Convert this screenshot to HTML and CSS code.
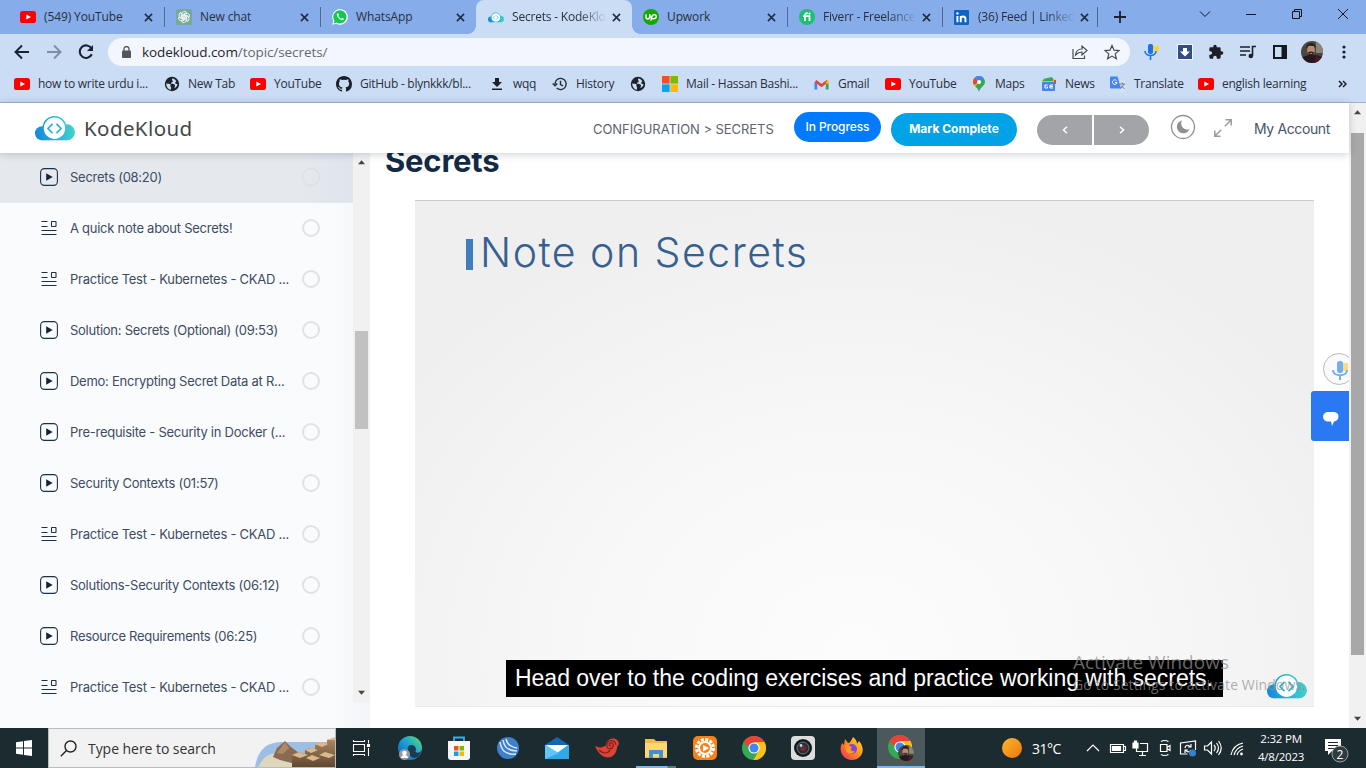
FILE: index.html
```
<!DOCTYPE html>
<html lang="en">
<head>
<meta charset="utf-8">
<title>Secrets - KodeKloud</title>
<link rel="stylesheet" href="styles.css">
</head>
<body>
<svg class="defs" aria-hidden="true">
  <defs>
    <linearGradient id="cloud" gradientUnits="userSpaceOnUse" x1="0" y1="18" x2="40" y2="12"><stop offset="0" stop-color="#1687d9"/><stop offset=".55" stop-color="#25b9dc"/><stop offset="1" stop-color="#4bd0c5"/></linearGradient>
    <linearGradient id="edge" x1="0" y1="1" x2="1" y2="0"><stop offset="0" stop-color="#0b58b0"/><stop offset=".5" stop-color="#169ed8"/><stop offset="1" stop-color="#65df68"/></linearGradient>
    <linearGradient id="sun" x1="0" y1="0" x2="1" y2="1"><stop offset="0" stop-color="#fbb829"/><stop offset="1" stop-color="#ee7511"/></linearGradient>
    <linearGradient id="fox" x1="1" y1="0" x2="0" y2="1"><stop offset="0" stop-color="#ffe32f"/><stop offset=".5" stop-color="#ff8a1c"/><stop offset="1" stop-color="#ef2666"/></linearGradient>
    <linearGradient id="rock" x1="0" y1="0" x2="0" y2="1"><stop offset="0" stop-color="#b08b60"/><stop offset="1" stop-color="#5e4832"/></linearGradient>
  </defs>
  <symbol id="yt" viewBox="0 0 16 12"><rect width="16" height="12" rx="2.6" fill="#f00"/><path d="M6.3 3.4 11 6 6.3 8.6z" fill="#fff"/></symbol>
  <symbol id="x" viewBox="0 0 10 10"><path d="M1 1l8 8M9 1 1 9" stroke="#1f2b40" stroke-width="1.7"/></symbol>
  <symbol id="gpt" viewBox="0 0 16 16"><rect width="16" height="16" rx="2" fill="#75a99c"/><g fill="none" stroke="#fff" stroke-width=".8"><path id="petal" d="M6 8.800V4.800a2.500 2.500 0 0 1 4.500-1.500L7 5.400v3.200"/><use href="#petal" transform="rotate(60 8 8)"/><use href="#petal" transform="rotate(120 8 8)"/><use href="#petal" transform="rotate(180 8 8)"/><use href="#petal" transform="rotate(240 8 8)"/><use href="#petal" transform="rotate(300 8 8)"/></g></symbol>
  <symbol id="wa" viewBox="0 0 16 16"><path d="M.2 15.8 1.4 12A7.8 7.8 0 1 1 4.3 14.8z" fill="#fff"/><path d="M1.700 14.400 2.500 11.700A6.600 6.600 0 1 1 4.600 13.600z" fill="#13c850"/><path d="M5.500 4.300c-1 .7-1 2 .2 3.800s3.200 3.300 4.600 3.200 1.800-1.300 1.500-1.700L10 8.700l-.9 1C7.800 9.200 6.900 8.200 6.400 7l.7-.9-.7-1.700z" fill="#fff"/></symbol>
  <symbol id="kk" viewBox="0 0 40 25"><g fill="url(#cloud)"><circle cx="19.500" cy="12" r="12"/><circle cx="7" cy="17.300" r="7"/><circle cx="32" cy="16.300" r="8"/><path d="M7 14h25v10.300H7z"/></g><circle cx="19.500" cy="12.300" r="10.700" fill="#fff"/><path d="m17.500 7.800-4.500 4.700 4.500 4.700m4-9.400 4.500 4.700-4.500 4.700" fill="none" stroke="#29b3d6" stroke-width="1.700"/></symbol>
  <symbol id="up" viewBox="0 0 16 16"><circle cx="8" cy="8" r="8" fill="#14a800"/><path d="M3 5.300v2.800c0 2.600 3.600 2.600 3.600 0V5.300c1 3.400 2 4.500 3.800 4.500 3.800 0 3.600-4.200.8-4.200-2.400 0-2.600 2.300-3.300 6.100" fill="none" stroke="#fff" stroke-width="1.400"/></symbol>
  <symbol id="fi" viewBox="0 0 16 16"><circle cx="8" cy="8" r="8" fill="#1dbf73"/><path d="M6 12V6q0-2 2.800-1.700M4 7.200h6.500V12" fill="none" stroke="#fff" stroke-width="1.800"/><circle cx="10.500" cy="4.600" r="1.100" fill="#fff"/></symbol>
  <symbol id="li" viewBox="0 0 14 14"><rect width="14" height="14" rx="1" fill="#0a66c2"/><path d="M3.200 5.500v6M6.300 5.500v6M6.300 8.500c0-3.200 4.400-3.200 4.400 0v3" fill="none" stroke="#fff" stroke-width="1.800"/><circle cx="3.200" cy="3.200" r="1.100" fill="#fff"/></symbol>
  <symbol id="globe" viewBox="0 0 16 16"><circle cx="8" cy="8" r="7.200" fill="#1d222b"/><path d="M2.300 7.200c1.500.8 2 .3 3.500.8 2 1-.5 1.800 1.200 3v2.800C4 13.300 2 10.500 2.300 7.200zM8.500 2.600c-1.500 1.700.8 2 .2 3.200-.5 1-2 .4-1.700 1.600 1.500.8 3 .2 3.800 1.300s-.4 2.200-.4 3.400c1.700-.8 3-2.400 3.100-4.200-1.300.2-2-.2-2.500-1.200l1.300-1.200C11.500 3.800 10.300 2.800 8.500 2.600z" fill="#cbdcf5"/></symbol>
  <symbol id="gh" viewBox="0 0 16 16"><path fill="#1b2028" d="M8 0C3.580 0 0 3.580 0 8c0 3.540 2.290 6.530 5.470 7.590.400.070.550-.170.550-.380v-1.500c-2.010.370-2.530-.490-2.690-.940-.090-.230-.480-.940-.820-1.130-.280-.150-.680-.520-.010-.530.630-.010 1.080.580 1.230.820.720 1.210 1.870.870 2.330.660.070-.520.280-.870.510-1.070-1.780-.200-3.640-.890-3.640-3.950 0-.870.310-1.590.820-2.150-.080-.200-.360-1.020.080-2.120 0 0 .670-.210 2.200.820a7.600 7.600 0 0 1 4 0c1.530-1.040 2.200-.820 2.200-.820.440 1.100.160 1.920.080 2.120.510.560.820 1.270.820 2.150 0 3.070-1.870 3.750-3.650 3.950.290.250.540.730.540 1.480v2.200c0 .210.150.460.550.380A8 8 0 0 0 16 8c0-4.420-3.580-8-8-8z"/></symbol>
  <symbol id="dl" viewBox="0 0 16 16"><path d="M6 2h4v4h3l-5 5-5-5h3zM3 12.500h10V14H3z" fill="#1b2028"/></symbol>
  <symbol id="hist" viewBox="0 0 16 16"><path d="M3 8a5.600 5.600 0 1 1 1.700 4M.7 7.500 3 9.800l2.300-2.300M8.500 4.800v3.700l2.600 1.500" fill="none" stroke="#252b35" stroke-width="1.400"/></symbol>
  <symbol id="ms" viewBox="0 0 16 16"><path fill="#f25022" d="M0 0h7.600v7.600H0z"/><path fill="#7fba00" d="M8.400 0H16v7.600H8.400z"/><path fill="#00a4ef" d="M0 8.400h7.600V16H0z"/><path fill="#ffb900" d="M8.400 8.400H16V16H8.400z"/></symbol>
  <symbol id="gm" viewBox="0 0 16 12"><path d="M1.800 11.500V3.500" stroke="#4285f4" stroke-width="3"/><path d="M14.200 11.500V3.500" stroke="#34a853" stroke-width="3"/><path d="m1.500 2.200 6.500 5 6.500-5" fill="none" stroke="#ea4335" stroke-width="3"/><path d="m12.700 3.500 3-2.700v4.400h-3z" fill="#fbbc04"/></symbol>
  <symbol id="map" viewBox="0 0 12 16"><clipPath id="pin"><path d="M6 0a6 6 0 0 0-6 6c0 4 5 5 6 10 1-5 6-6 6-10a6 6 0 0 0-6-6z"/></clipPath><g clip-path="url(#pin)"><path d="M0 0h12v16H0z" fill="#34a853"/><path d="M2 2 6 6l6-6H0z" fill="#4285f4"/><path d="M0 0 6 6 0 13z" fill="#fbbc04"/><path d="M0 0 6 6 1 9H0z" fill="#ea4335"/><path d="M1.500 1.500 6 6l5-6H2z" fill="#4285f4"/></g><circle cx="6" cy="6" r="2.100" fill="#fff"/></symbol>
  <symbol id="news" viewBox="0 0 16 14"><path d="M2 2 11 0l1 4z" fill="#34a853"/><path d="m8 2 7 1v4H8z" fill="#ea4335"/><path d="M1 3h12v4H1z" fill="#fbbc04"/><path d="M2 2.500 12 1v3H2z" fill="#34a853"/><rect x="1" y="5" width="13" height="9" rx="1" fill="#4285f4"/><path d="M6.500 8H4v3h2.500V9.500M12 8H9v3h3M9 9.500h3" fill="none" stroke="#fff"/></symbol>
  <symbol id="tr" viewBox="0 0 16 16"><path d="M7 4h7.500q1 0 1 1v11H10z" fill="#dce1e8"/><path d="M9.500 8H15M12.300 6.500V8M14 8q-1 3-4 4.500M11 9.500l3.500 3.500" stroke="#66809f" fill="none"/><path d="M1 .5h6.500L11 12.500H1q-1 0-1-1v-10q0-1 1-1z" fill="#4285f4"/><path d="M6.500 4.500a2.300 2.300 0 1 0 .6 2H5" fill="none" stroke="#fff"/></symbol>
  <symbol id="mic" viewBox="0 0 16 16"><path d="M8 2h7v5h-5z" fill="#fbd33c"/><rect x="4" y="0" width="5" height="10" rx="2" fill="#1a73e8"/><path d="M1 7c0 6 11 6 11 0M6.500 12v4" fill="none" stroke="#1a73e8" stroke-width="1.600"/></symbol>
  <symbol id="face" viewBox="0 0 22 22"><clipPath id="fc"><circle cx="11" cy="11" r="11"/></clipPath><g clip-path="url(#fc)"><path fill="#4b4740" d="M0 0h22v22H0z"/><path fill="#8b8577" d="M15 0h7v12h-7z"/><path d="M0 22v-5l7-3 8 0 7 2v6z" fill="#251820"/><path d="m15 15 7 2v5h-9z" fill="#4c1a25"/><ellipse cx="10" cy="9" rx="3.900" ry="5.800" fill="#b98a72"/><path d="M5.500 8C4 0 16 0 14.500 8L13 5 7.500 4.800zM7 11.500q3-2 6 0-1 4.500-3 4.500t-3-4.500z" fill="#251f20"/><path d="M8.700 12h2.600v.9H8.700z" fill="#aa8073"/></g></symbol>
  <symbol id="play" viewBox="0 0 18 18"><rect x=".6" y=".6" width="16.800" height="16.800" rx="3.800" fill="none" stroke="#1d304b" stroke-width="1.100"/><path d="M6.200 5.200v7.600L12.700 9z" fill="#14243c"/></symbol>
  <symbol id="note" viewBox="0 0 16 16"><path d="M.5 1.500h6M.5 6.500h6M.5 10.500h15M.5 14.500h15" stroke="#1d304b" stroke-width="1.100"/><rect x="10.500" y="1.500" width="4.500" height="5" rx=".5" fill="none" stroke="#1d304b" stroke-width="1.100"/></symbol>
  <symbol id="chrome" viewBox="0 0 24 24"><circle cx="12" cy="12" r="12" fill="#34a853"/><path d="M12 6h10.400A12 12 0 0 1 11.500 24L17 14z" fill="#fbc116"/><path d="M1.600 6A12 12 0 0 1 22.400 6H12l-5 6z" fill="#ea4335"/><circle cx="12" cy="12" r="5.600" fill="#fff"/><circle cx="12" cy="12" r="4.500" fill="#4285f4"/></symbol>
  <symbol id="up-arrow" viewBox="0 0 8 5"><path d="m4 0 4 4.500H0z" fill="#444"/></symbol>
</svg>

<div class="browser">
  <div class="tabs">
    <div class="tab"><svg class="ico yt"><use href="#yt"/></svg><span>(549) YouTube</span><svg class="close"><use href="#x"/></svg></div>
    <div class="tab"><svg class="ico"><use href="#gpt"/></svg><span>New chat</span><svg class="close"><use href="#x"/></svg></div>
    <div class="tab plain"><svg class="ico"><use href="#wa"/></svg><span>WhatsApp</span><svg class="close"><use href="#x"/></svg></div>
    <div class="tab active"><svg class="ico kk"><use href="#kk"/></svg><span class="fade">Secrets - KodeKlo</span><svg class="close"><use href="#x"/></svg></div>
    <div class="tab"><svg class="ico"><use href="#up"/></svg><span>Upwork</span><svg class="close"><use href="#x"/></svg></div>
    <div class="tab"><svg class="ico"><use href="#fi"/></svg><span class="fade">Fiverr - Freelance</span><svg class="close"><use href="#x"/></svg></div>
    <div class="tab"><svg class="ico li"><use href="#li"/></svg><span class="fade">(36) Feed | Linked</span><svg class="close"><use href="#x"/></svg></div>
    <svg class="newtab" viewBox="0 0 12 12"><path d="M6 0v12M0 6h12" stroke="#1a2230" stroke-width="1.800"/></svg>
    <svg class="winbtns" viewBox="0 0 160 30" fill="none" stroke="#10151e"><path d="m10 11.500 5 5 5-5M56 14.500h10M102.500 11.500h7v7h-7zM104.500 11.500v-2h7v7h-2M148 9l10 10M158 9l-10 10"/></svg>
  </div>
  <div class="toolbar">
    <svg class="nav" viewBox="0 0 108 36" fill="none" stroke-width="1.900"><path d="M29 18H16M22 11.500 15.500 18l6.500 6.500" stroke="#1a212d"/><path d="M47 18h13M54 11.500l6.500 6.500-6.500 6.500" stroke="#7f8ca5"/><path d="M91.500 14.500a6.300 6.300 0 1 0 .3 5.800" stroke="#1a212d" stroke-width="2.100"/><path d="M93 11v6h-6z" fill="#1a212d"/></svg>
    <div class="url">
      <svg class="lock" viewBox="0 0 9 12"><rect y="4.500" width="9" height="7.500" rx="1" fill="#51565e"/><path d="M2 5V3a2.500 2.500 0 0 1 5 0v2" fill="none" stroke="#51565e" stroke-width="1.300"/></svg>
      <span class="addr"><b>kodekloud.com</b>/topic/secrets/</span>
      <svg class="urlicons" viewBox="0 0 48 16" fill="none" stroke="#454b55" stroke-width="1.200"><path d="M1 5v9.500h11.500v-3M3.500 11c.5-4 3-6 6.500-6V2l5 4.500L10 11V8c-3 0-4.500 1-6.500 3zM40 1.500l2 4.700 5 .4-3.800 3.300 1.200 4.900-4.400-2.700-4.400 2.700 1.200-4.900L33 6.600l5-.4z"/></svg>
    </div>
    <div class="exts">
      <svg class="e1"><use href="#mic"/></svg>
      <svg class="e2" viewBox="0 0 16 16"><rect x=".5" y=".5" width="15" height="15" fill="#344d88" stroke="#f4f7fb"/><path d="M6 4h4v3.500h3l-5 5-5-5h3z" fill="#fff"/></svg>
      <svg class="e3" viewBox="0 0 24 24"><path fill="#1b2028" d="M20.500 11H19V7a2 2 0 0 0-2-2h-4V3.500a2.500 2.500 0 0 0-5 0V5H4a2 2 0 0 0-2 2v3.800h1.500a2.700 2.700 0 0 1 0 5.400H2V20a2 2 0 0 0 2 2h3.800v-1.500a2.700 2.700 0 0 1 5.400 0V22H17a2 2 0 0 0 2-2v-4h1.500a2.500 2.500 0 0 0 0-5z"/></svg>
      <svg class="e4" viewBox="0 0 16 14"><path d="M0 2h10M0 6h10M0 10h6M12.500 11V1.500H16" fill="none" stroke="#1b2028" stroke-width="1.600"/><circle cx="10.800" cy="11" r="2.300" fill="#1b2028"/></svg>
      <svg class="e5" viewBox="0 0 14 14"><rect x="1" y="1" width="12" height="12" fill="#cbdcf5" stroke="#14181f" stroke-width="2"/><path d="M8.500 0H14v14H8.500z" fill="#14181f"/></svg>
      <svg class="e6"><use href="#face"/></svg>
      <svg class="e7" viewBox="0 0 4 14" fill="#1b2028"><circle cx="2" cy="2" r="1.600"/><circle cx="2" cy="7" r="1.600"/><circle cx="2" cy="12" r="1.600"/></svg>
    </div>
  </div>
  <div class="marks">
    <div class="mark"><svg class="ico yt"><use href="#yt"/></svg><span>how to write urdu i...</span></div>
    <div class="mark"><svg class="ico"><use href="#globe"/></svg><span>New Tab</span></div>
    <div class="mark"><svg class="ico yt"><use href="#yt"/></svg><span>YouTube</span></div>
    <div class="mark"><svg class="ico"><use href="#gh"/></svg><span>GitHub - blynkkk/bl...</span></div>
    <div class="mark"><svg class="ico"><use href="#dl"/></svg><span>wqq</span></div>
    <div class="mark"><svg class="ico"><use href="#hist"/></svg><span>History</span></div>
    <div class="mark"><svg class="ico"><use href="#globe"/></svg></div>
    <div class="mark"><svg class="ico"><use href="#ms"/></svg><span>Mail - Hassan Bashi...</span></div>
    <div class="mark"><svg class="ico gm"><use href="#gm"/></svg><span>Gmail</span></div>
    <div class="mark"><svg class="ico yt"><use href="#yt"/></svg><span>YouTube</span></div>
    <div class="mark"><svg class="ico"><use href="#map"/></svg><span>Maps</span></div>
    <div class="mark"><svg class="ico"><use href="#news"/></svg><span>News</span></div>
    <div class="mark"><svg class="ico"><use href="#tr"/></svg><span>Translate</span></div>
    <div class="mark"><svg class="ico yt"><use href="#yt"/></svg><span>english learning</span></div>
    <svg class="more" viewBox="0 0 9 8"><path d="m1 1 3 3-3 3m4-6 3 3-3 3" fill="none" stroke="#1b2028" stroke-width="1.500"/></svg>
  </div>
</div>

<div class="page">
  <div class="site">
    <header class="head">
      <svg class="logo"><use href="#kk"/></svg>
      <span class="brand">KodeKloud</span>
      <span class="crumb">CONFIGURATION &gt; SECRETS</span>
      <span class="progress">In Progress</span>
      <span class="complete">Mark Complete</span>
      <span class="pager"><i><svg viewBox="0 0 6 8"><path d="M5 .8 1.500 4 5 7.200"/></svg></i><i><svg viewBox="0 0 6 8"><path d="M1 .8 4.500 4 1 7.200"/></svg></i></span>
      <svg class="moon" viewBox="0 0 26 26"><circle cx="13" cy="13" r="11.500" fill="none" stroke="#8e9093" stroke-width="1.300"/><path d="M12 6.500a6.500 6.500 0 1 0 7.500 8.500A6 6 0 0 1 12 6.500z" fill="#8e9093"/></svg>
      <svg class="expand" viewBox="0 0 18 18"><path d="M11.500.8h5.700v5.700M16.800 1.200l-6 6M6.500 17.200H.8v-5.700M1.200 16.800l6-6" fill="none" stroke="#999b9e" stroke-width="1.500"/></svg>
      <span class="account">My Account</span>
    </header>
    <div class="body">
      <nav class="side">
        <div class="lessons">
          <div class="lesson current"><svg class="li-ico"><use href="#play"/></svg><span>Secrets (08:20)</span><i class="ring"></i></div>
          <div class="lesson"><svg class="li-ico n"><use href="#note"/></svg><span>A quick note about Secrets!</span><i class="ring"></i></div>
          <div class="lesson"><svg class="li-ico n"><use href="#note"/></svg><span>Practice Test - Kubernetes - CKAD ...</span><i class="ring"></i></div>
          <div class="lesson"><svg class="li-ico"><use href="#play"/></svg><span>Solution: Secrets (Optional) (09:53)</span><i class="ring"></i></div>
          <div class="lesson"><svg class="li-ico"><use href="#play"/></svg><span>Demo: Encrypting Secret Data at R...</span><i class="ring"></i></div>
          <div class="lesson"><svg class="li-ico"><use href="#play"/></svg><span>Pre-requisite - Security in Docker (...</span><i class="ring"></i></div>
          <div class="lesson"><svg class="li-ico"><use href="#play"/></svg><span>Security Contexts (01:57)</span><i class="ring"></i></div>
          <div class="lesson"><svg class="li-ico n"><use href="#note"/></svg><span>Practice Test - Kubernetes - CKAD ...</span><i class="ring"></i></div>
          <div class="lesson"><svg class="li-ico"><use href="#play"/></svg><span>Solutions-Security Contexts (06:12)</span><i class="ring"></i></div>
          <div class="lesson"><svg class="li-ico"><use href="#play"/></svg><span>Resource Requirements (06:25)</span><i class="ring"></i></div>
          <div class="lesson"><svg class="li-ico n"><use href="#note"/></svg><span>Practice Test - Kubernetes - CKAD ...</span><i class="ring"></i></div>
        </div>
        <div class="sbar sidebar-scroll"><svg class="arr"><use href="#up-arrow"/></svg><i class="thumb"></i><svg class="arr down"><use href="#up-arrow"/></svg></div>
      </nav>
      <main class="main">
        <h1>Secrets</h1>
        <div class="video">
          <div class="slide"><i></i><span>Note on Secrets</span></div>
          <div class="caption"><span>Head over to the coding exercises and practice working with secrets.</span></div>
          <svg class="vlogo"><use href="#kk"/></svg>
          <div class="wm"><p class="wm1">Activate Windows</p><p class="wm2">Go to Settings to activate Windows.</p></div>
        </div>
        <div class="floaters">
          <div class="voice"><svg viewBox="0 0 16 20"><path d="M9 3h8v8H9z" fill="#fbdc7c"/><rect x="5" y="1" width="6" height="12" rx="2.500" fill="#73aef3"/><path d="M1 10c0 7 14 7 14 0M8 15v5" fill="none" stroke="#73aef3" stroke-width="2"/></svg></div>
          <div class="chat"><svg viewBox="0 0 16 14"><path d="M5 0h6c6 0 6 9 0 9.500L9 14 8 9.500H5C-1.500 9.500-1.500 0 5 0z" fill="#fff"/></svg></div>
        </div>
      </main>
    </div>
  </div>
  <div class="sbar page-scroll"><svg class="arr"><use href="#up-arrow"/></svg><i class="thumb"></i><svg class="arr down"><use href="#up-arrow"/></svg></div>
</div>

<div class="taskbar">
  <div class="start"><svg viewBox="0 0 16 16" fill="#fff"><path d="M0 2.200 7 1.200v6.300H0zM8 1.100 16 0v7.500H8zM0 8.500h7v6.300l-7-1zM8 8.500h8V16l-8-1.100z"/></svg></div>
  <div class="search">
    <svg class="lens" viewBox="0 0 17 17" fill="none" stroke="#222" stroke-width="1.400"><circle cx="10.500" cy="6.500" r="5.500"/><path d="M6.500 10.500.8 16.200"/></svg>
    <span>Type here to search</span>
    <svg class="scene" viewBox="0 0 80 38"><path d="M0 38C3 20 12 13 28 13h52v25z" fill="#9dbfe6"/><path d="M5 35c7-14 22-13 23-3l14 3v3H3z" fill="#dfd7bd"/><path d="m18 28 4-9 8-7 6 6 8 6-7 10-12-3z" fill="#896b51"/><path d="m22 24 8-11 4 6-6 6z" fill="#ae8a68"/><g fill="url(#rock)"><path d="M72 11l8-2v29h-8zM60 16l6-2 7 2v22H60zM50 21l5-2 8 2v17H50zM64 27l7-4 9 3v12H64zM51 29l6-3 8 3v9H51zM37 26l7-3 9 3v12H37z"/></g><g fill="#dab98f"><path d="m37 26 7-3 9 3-8 3zM50 21l6-2 7 2-7 3zM60 15l6-2 7 2-6 3zM64 26l6-3 10 3-6 3zM51 29l6-3 8 3-7 3zM72 11l8-3v3z"/></g></svg>
  </div>
  <div class="apps">
    <div class="app"><svg viewBox="0 0 24 24" fill="none" stroke="#fff" stroke-width="1.100"><path d="M4.500 8.500h11v7h-11zM4.500 4v1.500h11V4M4.500 20v-1.500h11V20M19.500 4v3.500M19.500 12v8"/><path d="M18.500 8.500h2v2h-2z" fill="#fff"/></svg></div>
    <div class="app"><svg viewBox="0 0 24 24"><circle cx="12" cy="12" r="12" fill="url(#edge)"/><path d="M10 14c-2-6 7-7 8-1 .3 1.500-1.500 2 .5 3.500 2 .8 4-.5 5-2.500-1 5-4 8-7 8-4 0-6-4-6.500-8z" fill="#1b3c50"/><circle cx="6.500" cy="18.500" r="5.500" fill="#909da4"/><circle cx="6.500" cy="17" r="2.300" fill="#fff"/><path d="M3 22c0-4 7-4 7 0z" fill="#fff"/></svg></div>
    <div class="app"><svg viewBox="0 0 24 24"><path d="M7 7V1.500h10V7" fill="none" stroke="#2fb4ed" stroke-width="1.800"/><path d="M1 5h22v16q0 3-3 3H4q-3 0-3-3z" fill="#f7f7f7"/><path d="M7 10h4.500v4.500H7z" fill="#f25022"/><path d="M12.500 10H17v4.500h-4.500z" fill="#7fba00"/><path d="M7 15.500h4.500V20H7z" fill="#00a4ef"/><path d="M12.500 15.500H17V20h-4.500z" fill="#ffb900"/></svg></div>
    <div class="app"><svg viewBox="0 0 24 24"><circle cx="12" cy="12" r="11" fill="#3e7fcc"/><path d="M4 6c1 8 6 13 16 12M7 4c1 7 6 11 14 11M10 3c1 5 5 8 11 9" fill="none" stroke="#dceafa" stroke-width="1.500"/></svg></div>
    <div class="app"><svg viewBox="0 0 24 24"><path d="m0 9 12-8 12 8v14H0z" fill="#1266b2"/><path d="M0 9h24v14H0z" fill="#32a9e7"/><path d="M1 9h22l-11 8z" fill="#fff"/><path d="m0 9 14 8-14 6z" fill="#5ec6fb"/></svg></div>
    <div class="app"><svg viewBox="0 0 24 24"><path d="M0 10c4 2 8 2 11-1C12 1 23 0 24 8c-1 2-2 2-2 4C20 25 6 25 0 10z" fill="#dc4333"/><path d="M21 9c-1-7-11-5-9 2 3 5 9-1 5-4-3-1-4 3-1 3M4 14c4 4 9 4 11 0" fill="none" stroke="#7c1e21" stroke-width="1.200"/></svg></div>
    <div class="app open"><svg viewBox="0 0 24 24"><path d="M1 3h9l2 2h11v17H1z" fill="#eeb94f"/><path d="M1 7h22v14H1z" fill="#fbd776"/><path d="M5 22v-8h14v8h-4v-4H9v4z" fill="#3f91d0"/></svg></div>
    <div class="app"><svg viewBox="0 0 24 24"><rect width="24" height="24" rx="5" fill="#f78318"/><circle cx="12" cy="12" r="8.500" fill="none" stroke="#fff" stroke-width="3" stroke-dasharray="3 1.450"/><circle cx="12" cy="12" r="7" fill="#fff"/><circle cx="12" cy="12" r="5" fill="#f78318"/><path d="m10 9 6 3-6 3.500z" fill="#fff"/></svg></div>
    <div class="app"><svg><use href="#chrome"/></svg></div>
    <div class="app"><svg viewBox="0 0 24 24"><rect width="24" height="24" rx="4" fill="#dcdddd"/><circle cx="12" cy="12" r="9" fill="#16191b"/><circle cx="12" cy="12" r="6" fill="#26333b" stroke="#69757c"/><circle cx="12" cy="12" r="2.800" fill="#7c272c"/><circle cx="10" cy="9.500" r="1.400" fill="#a6dfe7"/></svg></div>
    <div class="app"><svg viewBox="0 0 24 24"><path d="M5 3l3 4c2 0 3-2 5-6 3 2 4 5 4 7l2-3c8 9 2 19-7 19S-2 15 2 7l2 2z" fill="url(#fox)"/><circle cx="12" cy="13" r="5" fill="#8248d1"/><path d="M5 10c3-3 4 0 7 1-3 3 0 5 3 4-3 5-9 2-9-1z" fill="#ff9c20"/></svg></div>
    <div class="app focus"><svg viewBox="0 0 28 26"><use href="#chrome" x="1" y="0" width="24" height="24"/><use href="#face" x="11" y="10" width="16" height="16"/></svg></div>
  </div>
  <div class="weather"><svg viewBox="0 0 20 20"><circle cx="10" cy="10" r="10" fill="url(#sun)"/></svg><span>31°C</span></div>
  <svg class="tray" viewBox="0 0 164 24" fill="none" stroke="#fff" stroke-width="1.200"><path d="m1 15 6-6 6 6"/><path d="M24.500 8.500h13v8h-13zM38 10.500h1.500v4H38"/><path d="M26.500 10.500h8v4h-8z" fill="#fff"/><path d="M54 7.500h7.500v8h-11V12M53 19.500h7M56.500 16v3"/><path d="M47 7h5v5h-5zM48.500 7V5h2v2" fill="#fff"/><path d="M74.500 8.500h6.500v7h-6.500zM81.500 11l2.500-1.500v5L81.500 13M75 5.500q3.500-2 7.500 0M75 18.500q3.500 2 7.500 0"/><path d="M109.500 14V5l-15 2v11h7M99 12c1-4 4-3 5.500-1M105 8v3h-3M105 14c-2 3-4 2-5.500 0M99 17v-3h3"/><circle cx="106.500" cy="17" r="3.500" fill="#3183d0" stroke="none"/><path d="M118.500 10h3l4-4v12l-4-4h-3zM128 9q2.500 3 0 6M130.500 7q4 5 0 10M132.500 5q5.500 7 0 14"/><path d="M145 19q2-10 12-12M148 19q2-7 9-9M151 19q1-4 6-6"/><circle cx="155.500" cy="18" r="1.400" fill="#fff" stroke="none"/></svg>
  <div class="clock"><span>2:32 PM</span><span>4/8/2023</span></div>
  <svg class="notif" viewBox="0 0 28 28"><path d="M1 2h16v12H8l-4 4v-4H1z" fill="#fff"/><path d="M4 5.500h10M4 8.500h10M4 11.500h7" stroke="#1c2b30"/><circle cx="16" cy="17" r="8" fill="#303b40" stroke="#97a0a3"/><text x="16" y="21.500" text-anchor="middle">2</text></svg>
</div>
</body>
</html>
```
FILE: styles.css
```
* { box-sizing: border-box; }
html, body { margin: 0; width: 1366px; height: 768px; overflow: hidden; }
body { display: flex; flex-direction: column; background: #fff; font-family: Inter, "Liberation Sans", sans-serif; }
svg { display: block; flex: none; }
.defs { position: absolute; width: 0; height: 0; }

/* browser chrome */
.browser { height: 103px; flex: none; background: #cbdcf5; border-bottom: 1px solid #a3b2ce; font: 12px/16px "Open Sans", "Noto Sans", sans-serif; color: #28303d; }
.tabs { height: 34px; display: flex; padding-left: 8px; background: #86ace9; }
.tab { width: 156px; height: 34px; display: flex; align-items: center; padding: 0 12px 0 12px; position: relative; }
.tab:nth-child(n+5) { width: 155px; }
.tab:nth-child(5) { margin-left: -1px; width: 156px; }
.tab::after { content: ""; position: absolute; right: -1px; top: 7px; width: 1px; height: 20px; background: #53688c; }
.tab.plain::after { display: none; }
.tab.active { background: #cbdcf5; border-radius: 8px 8px 0 0; z-index: 1; }
.tab.active::before, .tab.active::after { content: ""; position: absolute; top: auto; bottom: 0; width: 8px; height: 8px; }
.tab.active::before { left: -8px; background: radial-gradient(circle at 0 0, transparent 7.500px, #cbdcf5 8px); }
.tab.active::after { right: -8px; background: radial-gradient(circle at 100% 0, transparent 7.500px, #cbdcf5 8px); }
.tab span { flex: 1; margin-left: 8px; white-space: nowrap; letter-spacing: -.12px; }
.tab .fade { letter-spacing: -.2px; -webkit-mask-image: linear-gradient(90deg, #000 70%, transparent 100%); mask-image: linear-gradient(90deg, #000 70%, transparent 100%); }
.ico { width: 16px; height: 16px; }
.ico.yt { height: 12px; }
.ico.gm { width: 15px; height: 11px; margin-right: 1px; }
.ico.kk { height: 11px; }
.ico.li { width: 15px; height: 15px; margin-right: 1px; }
.close { width: 9px; height: 9px; margin-left: 5px; margin-right: -1px; }
.newtab { width: 12px; height: 12px; margin: 11px 0 0 17px; }
.winbtns { width: 160px; height: 30px; margin-left: auto; margin-right: 16px; }
.toolbar { height: 36px; display: flex; align-items: center; }
.nav { width: 108px; height: 36px; }
.url { width: 1022px; height: 28px; border-radius: 14px; background: #f3f7fd; display: flex; align-items: center; padding-left: 14px; }
.lock { width: 9px; height: 12px; }
.addr { margin-left: 11px; font-size: 13.500px; letter-spacing: -.08px; color: #646a73; }
.addr b { font-weight: 400; color: #1f252e; }
.urlicons { width: 48px; height: 16px; margin-left: auto; margin-right: 10px; }
.exts { display: flex; align-items: center; }
.e1 { width: 16px; height: 16px; margin-left: 14px; }
.e2 { width: 16px; height: 16px; margin-left: 17px; }
.e3 { width: 16px; height: 16px; margin-left: 15px; }
.e4 { width: 16px; height: 14px; margin-left: 16px; }
.e5 { width: 14px; height: 14px; margin-left: 17px; }
.e6 { width: 22px; height: 22px; margin-left: 14px; }
.e7 { width: 4px; height: 14px; margin-left: 19px; }
.marks { height: 28px; display: flex; align-items: center; padding-left: 14px; }
.mark { display: flex; align-items: center; gap: 8px; white-space: nowrap; letter-spacing: -.26px; }
.mark:nth-child(1) { width: 150px; }
.mark:nth-child(2), .mark:nth-child(3) { width: 86px; }
.mark:nth-child(4) { width: 153px; }
.mark:nth-child(5) { width: 63px; }
.mark:nth-child(6) { width: 78px; }
.mark:nth-child(7) { width: 32px; }
.mark:nth-child(8) { width: 152px; }
.mark:nth-child(9) { width: 71px; }
.mark:nth-child(10) { width: 86px; }
.mark:nth-child(11) { width: 70px; }
.mark:nth-child(12) { width: 69px; }
.mark:nth-child(13) { width: 88px; }
.mark:nth-child(14) { width: 140px; }
.more { width: 9px; height: 8px; }

/* site */
.page { height: 625px; flex: none; display: flex; }
.site { width: 1349px; display: flex; flex-direction: column; }
.head { height: 50px; flex: none; display: flex; align-items: center; padding-left: 35px; background: #fff; position: relative; z-index: 2; box-shadow: 0 1px 8px rgba(20,30,60,.22); white-space: nowrap; }
.logo { width: 40px; height: 25px; }
.brand { width: 508px; margin-left: 9px; padding-bottom: 1px; font: 20.500px/26px "Noto Sans", sans-serif; color: #444648; letter-spacing: .4px; }
.crumb { width: 201px; margin-left: 1px; padding-top: 2px; font-size: 13px; color: #5d6470; letter-spacing: -.06px; }
.progress { width: 87px; height: 30px; margin-top: -2px; border-radius: 15px; background: #007bff; color: #fff; font-size: 12px; font-weight: 500; line-height: 30px; text-align: center; letter-spacing: -.1px; }
.complete { width: 126px; height: 33px; margin: 2px 0 0 10px; border-radius: 17px; background: #02a2e6; color: #fff; font-size: 12px; font-weight: 700; line-height: 32px; text-align: center; }
.pager { width: 112px; height: 30px; margin: 4px 0 0 20px; display: flex; gap: 2px; border-radius: 15px; overflow: hidden; }
.pager i { flex: 1; background: #a3a4a8; display: flex; align-items: center; justify-content: center; }
.pager svg { width: 6px; height: 8px; fill: none; stroke: #fff; stroke-width: 1.500; }
.moon { width: 26px; height: 26px; margin: -2px 0 0 21px; }
.expand { width: 18px; height: 18px; margin-left: 18px; }
.account { margin-left: 22px; font-size: 14px; color: #44546a; letter-spacing: -.38px; }
.body { flex: 1; display: flex; min-height: 0; }
.side { width: 370px; display: flex; background: linear-gradient(90deg, #fafbfd 330px, #f3f5f9); }
.lessons { width: 353px; }
.lesson { height: 51px; display: flex; align-items: center; padding: 0 33px 2px 40px; font-size: 13px; color: #3c4c62; white-space: nowrap; }
.lesson.current { height: 50px; background: linear-gradient(90deg, #e5e9ee 300px, #dfe4ed); padding-bottom: 3px; }
.lesson span { flex: 1; margin-left: 12px; padding-top: 1px; letter-spacing: -.26px; }
.li-ico { width: 18px; height: 18px; }
.li-ico.n { width: 16px; height: 16px; margin: 0 1px; }
.ring { width: 18px; height: 18px; border: 2px solid #e0e2e5; border-radius: 50%; }
.current .ring { border-color: #d9dde2; border-width: 1px; }
.sbar { width: 17px; background: #f1f1f1; display: flex; flex-direction: column; align-items: center; justify-content: space-between; padding: 7px 0; }
.arr { width: 7px; height: 5px; }
.arr.down { transform: rotate(180deg); }
.thumb { width: 13px; }
.sidebar-scroll { height: 549px; }
.sidebar-scroll .thumb { height: 98px; background: #c1c1c1; margin-bottom: 96px; }
.page-scroll .thumb { height: 522px; background: #a8a8a8; margin-bottom: 43px; }
.main { flex: 1; position: relative; overflow: hidden; padding-left: 15px; }
h1 { margin: -13px 0 0; height: 60px; font-size: 31px; line-height: 42px; font-weight: 700; color: #132a45; letter-spacing: -.2px; }
.video { width: 899px; height: 507px; margin-left: 30px; position: relative; display: flex; flex-direction: column; border-top: 1px solid #c9cdcb; border-bottom: 1px solid #e9e9e9; background: radial-gradient(ellipse 560px 460px at 440px 450px, #fcfcfc 0, #f8f8f8 45%, #efefef 100%); }
.slide { display: flex; align-items: center; height: 106px; padding-left: 51px; }
.slide i { width: 7px; height: 31px; background: #417dbd; }
.slide span { margin: -4px 0 0 7px; font-size: 41px; color: #35608f; letter-spacing: 1.500px; font-weight: 300; }
.caption { width: 717px; height: 37px; margin: 353px 0 0 91px; padding-left: 9px; background: #000; color: #fff; font: 23px/37px "Liberation Sans", Arial, sans-serif; letter-spacing: -.02px; white-space: nowrap; }
.vlogo { position: absolute; width: 40px; height: 25px; left: 852px; top: 473px; }
.wm { position: absolute; left: 658px; top: 449px; font-family: "Open Sans", sans-serif; color: rgba(145,145,145,.72); white-space: nowrap; }
.wm p { margin: 0; }
.wm1 { font-size: 19px; line-height: 24px; }
.wm2 { font-size: 14px; line-height: 21px; letter-spacing: .1px; }
.floaters { position: absolute; left: 941px; top: 200px; width: 38px; }
.voice { width: 32px; height: 32px; margin-left: 12px; border: 1px solid #bbb; border-radius: 50%; background: #fafafa; display: flex; align-items: center; justify-content: center; overflow: hidden; }
.voice svg { width: 16px; height: 20px; margin: 2px 0 0 2px; }
.chat { height: 50px; margin-top: 6px; border-radius: 3px 0 0 3px; background: #2b79f2; display: flex; align-items: center; padding: 5px 0 0 12px; }
.chat svg { width: 16px; height: 14px; }

/* taskbar */
.taskbar { height: 40px; flex: none; display: flex; background: #1c2b30; color: #fff; font-family: "Open Sans", "Noto Sans", sans-serif; white-space: nowrap; }
.start { width: 48px; display: flex; align-items: center; justify-content: center; }
.start svg { width: 16px; height: 16px; }
.search { width: 288px; height: 40px; display: flex; align-items: center; padding-left: 11px; border: 1px solid #b9bcbd; background: #f2f2f2; color: #333; font-size: 14px; overflow: hidden; }
.lens { width: 17px; height: 17px; }
.search span { margin-left: 11px; letter-spacing: -.05px; }
.scene { width: 80px; height: 38px; margin-left: auto; }
.apps { display: flex; }
.app { width: 49.200px; height: 40px; display: flex; align-items: center; justify-content: center; }
.app svg { width: 24px; height: 24px; }
.app.open { background: linear-gradient(90deg, #76b9ed 31px, #517b96 32px) 50% 100% / 40px 2px no-repeat; }
.app.focus { width: 48px; background: #4b585c; border-bottom: 2px solid #76b9ed; }
.app.focus svg { width: 28px; height: 26px; margin-top: 2px; }
.weather { width: 84px; margin-left: 77px; display: flex; align-items: center; font-size: 14px; }
.weather svg { width: 20px; height: 20px; }
.weather span { margin-left: 10px; letter-spacing: -.5px; }
.tray { width: 164px; height: 24px; margin-top: 8px; }
.clock { width: 62px; display: flex; flex-direction: column; align-items: center; font-size: 11.500px; line-height: 18px; padding-top: 2px; letter-spacing: -.2px; }
.notif { width: 28px; height: 28px; margin: 9px 0 0 12px; }
.notif text { font: 12px "Open Sans", sans-serif; fill: #fff; }
```
